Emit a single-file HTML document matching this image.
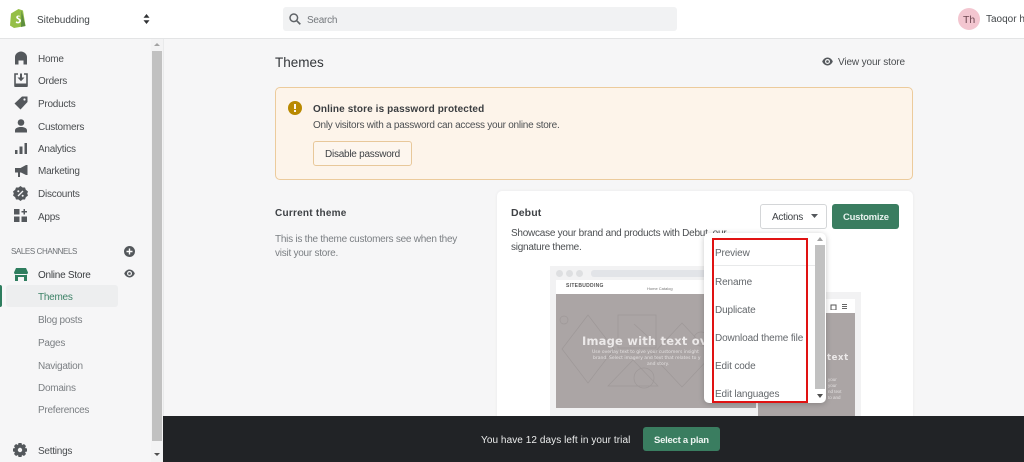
<!DOCTYPE html>
<html><head><meta charset="utf-8"><style>
html,body{margin:0;padding:0}
body{width:1024px;height:462px;overflow:hidden;background:#f6f6f7;position:relative;font-family:"Liberation Sans",sans-serif;color:#3a3d40;font-size:10px;letter-spacing:-.25px}
.t{position:absolute;white-space:nowrap;line-height:14px;margin-top:2px}
.a{position:absolute}
.b{font-weight:bold;letter-spacing:.12px}
svg{position:absolute;display:block}
.nav{left:38px;color:#4a4d50}
.sub{left:38px;color:#7b7f83}
.m{left:715px;color:#63676b;letter-spacing:-.13px}
</style></head><body>
<div class="a" style="left:0;top:0;width:1024px;height:38px;background:#fff;border-bottom:1px solid #e3e4e5"></div>
<svg style="left:9px;top:8px" width="18" height="20" viewBox="0 0 18 20"><path d="M2 5.500 9.500 1 14 2.500 16.500 18 5 20 1 17.500Z" fill="#95bf47"/><path d="M12.500 2.200 16.500 18 12 19Z" fill="#5e8e3e"/><path d="M10.800 7.800c-2-.8-3.600.2-3.600 1.600 0 1.800 3 1.800 3 3.400 0 1.200-1.500 1.400-3 .5l-.5 1.600c2.400 1 5.300.3 5.300-2.300 0-2.200-3-2.300-3-3.400 0-.6 1-.9 2.200-.4Z" fill="#fff"/></svg>
<div class="t" style="left:37px;top:12px;color:#43474a;letter-spacing:0">Sitebudding</div>
<svg style="left:143px;top:14px" width="7" height="10" viewBox="0 0 7 10"><path d="M3.500 0 6.500 3.700H.5ZM3.500 10 .5 6.300H6.500Z" fill="#2f3133"/></svg>
<div class="a" style="left:283px;top:7px;width:394px;height:24px;background:#f1f2f3;border-radius:3px"></div>
<svg style="left:289px;top:13px" width="12" height="12" viewBox="0 0 12 12"><circle cx="4.800" cy="4.800" r="3.800" fill="none" stroke="#5f6367" stroke-width="1.500"/><path d="M7.700 7.700 11.300 11.300" stroke="#5f6367" stroke-width="1.700"/></svg>
<div class="t" style="left:307px;top:12px;color:#74787c">Search</div>
<div class="a" style="left:958px;top:8px;width:22px;height:22px;border-radius:50%;background:#f3c6d0"></div>
<div class="t" style="left:963px;top:11px;color:#6d4650;font-size:10.500px;letter-spacing:0">Th</div>
<div class="t" style="left:986px;top:11px;color:#43474a;letter-spacing:0">Taoqor h</div>

<div class="a" style="left:163px;top:39px;width:1px;height:377px;background:#e9eaeb"></div>
<div class="a" style="left:151px;top:39px;width:12px;height:423px;background:#f3f3f4"></div>
<div class="a" style="left:152px;top:51px;width:10px;height:390px;background:#c1c1c1"></div>
<svg style="left:153px;top:42px" width="8" height="5"><path d="M4 1 7 4H1Z" fill="#a3a3a3"/></svg>
<svg style="left:153px;top:452px" width="8" height="5"><path d="M1 1H7L4 4Z" fill="#505050"/></svg>

<svg style="left:14px;top:51px" width="14" height="14" viewBox="0 0 14 14"><path d="M7 .5C10 .5 13 3 13 6V13.500H9.500V9.500H4.500V13.500H1V6C1 3 4 .5 7 .5Z" fill="#54585c"/></svg>
<div class="t nav" style="top:51px">Home</div>
<svg style="left:14px;top:73px" width="14" height="14" viewBox="0 0 14 14"><path d="M4 1H1V13H13V1H10" fill="none" stroke="#54585c" stroke-width="1.600"/><path d="M1 10.500H13V14H1Z" fill="#54585c"/><path d="M6 .5H8V4.500H10.500L7 8.300 3.500 4.500H6Z" fill="#54585c"/></svg>
<div class="t nav" style="top:73px">Orders</div>
<svg style="left:14px;top:96px" width="14" height="14" viewBox="0 0 14 14"><path d="M8 .5H13.500V6L6.500 13.500.5 7.500Z" fill="#54585c"/><circle cx="10.500" cy="3.500" r="1.100" fill="#f6f6f7"/></svg>
<div class="t nav" style="top:96px">Products</div>
<svg style="left:14px;top:119px" width="14" height="14" viewBox="0 0 14 14"><circle cx="7" cy="3.500" r="3.300" fill="#54585c"/><path d="M1 13.500V11.500C1 9 4 8 7 8S13 9 13 11.500V13.500Z" fill="#54585c"/></svg>
<div class="t nav" style="top:119px">Customers</div>
<svg style="left:15px;top:143px" width="12" height="11" viewBox="0 0 12 11"><path d="M0 7H2.500V11H0ZM4.500 3.500H7.500V11H4.500ZM9.500 0H12V11H9.500Z" fill="#54585c"/></svg>
<div class="t nav" style="top:141px">Analytics</div>
<svg style="left:14px;top:164px" width="14" height="14" viewBox="0 0 14 14"><path d="M12 1H13.500V11H12L7 8.500H6V13H4V8.500H1V4H6.500Z" fill="#54585c"/></svg>
<div class="t nav" style="top:163px">Marketing</div>
<svg style="left:13px;top:186px" width="15" height="15" viewBox="0 0 15 15"><path d="M7.500 0 9.500 1.500 12 1.500 12.800 3.800 15 5.500 14.200 7.500 15 9.500 12.800 11.200 12 13.500 9.500 13.500 7.500 15 5.500 13.500 3 13.500 2.200 11.200 0 9.500.8 7.500 0 5.500 2.200 3.800 3 1.500 5.500 1.500Z" fill="#54585c"/><path d="M5 10 10 5" stroke="#f6f6f7" stroke-width="1.300"/><circle cx="5.300" cy="5.300" r="1" fill="#f6f6f7"/><circle cx="9.700" cy="9.700" r="1" fill="#f6f6f7"/></svg>
<div class="t nav" style="top:186px">Discounts</div>
<svg style="left:14px;top:209px" width="14" height="13" viewBox="0 0 14 13"><path d="M0 0H5.500V5.500H0ZM0 7.500H5.500V13H0ZM7.500 7.500H13V13H7.500ZM9.500 0H11V2H13V3.500H11V5.500H9.500V3.500H7.500V2H9.500Z" fill="#54585c"/></svg>
<div class="t nav" style="top:209px">Apps</div>

<div class="t" style="left:11px;top:243px;font-size:8px;letter-spacing:-.4px;color:#6d7175">SALES CHANNELS</div>
<svg style="left:124px;top:246px" width="11" height="11" viewBox="0 0 11 11"><circle cx="5.500" cy="5.500" r="5.500" fill="#54585c"/><path d="M5.500 2.500V8.500M2.500 5.500H8.500" stroke="#fff" stroke-width="1.400"/></svg>
<svg style="left:124px;top:269px" width="11" height="9" viewBox="0 0 11 9"><path d="M5.500 .5C8 .5 10 2.500 10.800 4.500 10 6.500 8 8.500 5.500 8.500S1 6.500 .2 4.500C1 2.500 3 .5 5.500 .5Z" fill="#54585c"/><circle cx="5.500" cy="4.500" r="2.500" fill="#f6f6f7"/><circle cx="5.500" cy="4.500" r="1.300" fill="#54585c"/></svg>
<svg style="left:14px;top:268px" width="14" height="13" viewBox="0 0 14 13"><path d="M2 0H12L14 4.500C14 6 12.500 6.500 11.500 6H2.500C1.500 6.500 0 6 0 4.500Z" fill="#2e7d5e"/><path d="M1 7H4V13H1ZM10 7H13V13H10ZM4 7H10V9H4Z" fill="#2e7d5e"/></svg>
<div class="t" style="left:38px;top:267px;color:#3a3d40">Online Store</div>
<div class="a" style="left:0;top:285px;width:2px;height:22px;background:#2e7d5e;border-radius:0 2px 2px 0"></div>
<div class="a" style="left:6px;top:285px;width:112px;height:22px;background:#edeeef;border-radius:3px"></div>
<div class="t" style="left:38px;top:289px;color:#3d8267">Themes</div>
<div class="t sub" style="top:312px">Blog posts</div>
<div class="t sub" style="top:335px">Pages</div>
<div class="t sub" style="top:358px">Navigation</div>
<div class="t sub" style="top:380px">Domains</div>
<div class="t sub" style="top:402px">Preferences</div>
<svg style="left:13px;top:443px" width="14" height="14" viewBox="0 0 14 14"><path d="M5.500 0H8.500L9 2 11 1 13 3 12 5 14 5.500V8.500L12 9 13 11 11 13 9 12 8.500 14H5.500L5 12 3 13 1 11 2 9 0 8.500V5.500L2 5 1 3 3 1 5 2Z" fill="#54585c"/><circle cx="7" cy="7" r="2.200" fill="#f6f6f7"/></svg>
<div class="t nav" style="top:443px">Settings</div>

<div class="t" style="left:275px;top:52px;font-size:13.500px;line-height:17px;color:#33363a;letter-spacing:0">Themes</div>
<svg style="left:822px;top:57px" width="11" height="9" viewBox="0 0 11 9"><path d="M5.500 .5C8 .5 10 2.500 10.800 4.500 10 6.500 8 8.500 5.500 8.500S1 6.500 .2 4.500C1 2.500 3 .5 5.500 .5Z" fill="#54585c"/><circle cx="5.500" cy="4.500" r="2.500" fill="#f6f6f7"/><circle cx="5.500" cy="4.500" r="1.300" fill="#54585c"/></svg>
<div class="t" style="left:838px;top:54px;color:#4a4d50;letter-spacing:-.12px">View your store</div>

<div class="a" style="left:275px;top:87px;width:636px;height:91px;background:#fdf4ea;border:1px solid #eccb9c;border-radius:5px"></div>
<div class="a" style="left:288px;top:101px;width:14px;height:14px;border-radius:50%;background:#b98900"></div>
<div class="a" style="left:294px;top:104px;width:2px;height:5px;background:#fdf4ea"></div>
<div class="a" style="left:294px;top:110px;width:2px;height:2px;background:#fdf4ea"></div>
<div class="t b" style="left:313px;top:101px;color:#3a3d40">Online store is password protected</div>
<div class="t" style="left:313px;top:117px;color:#4c4f52">Only visitors with a password can access your online store.</div>
<div class="a" style="left:313px;top:141px;width:97px;height:23px;background:#fdf6ee;border:1px solid #e8c89a;border-radius:3px"></div>
<div class="t" style="left:325px;top:146px;color:#3f4246">Disable password</div>

<div class="t b" style="left:275px;top:205px;color:#3f4246;letter-spacing:.25px">Current theme</div>
<div class="t" style="left:275px;top:231px;color:#7b7f83">This is the theme customers see when they</div>
<div class="t" style="left:275px;top:245px;color:#7b7f83">visit your store.</div>

<div class="a" style="left:497px;top:191px;width:416px;height:230px;background:#fff;border-radius:5px 5px 0 0;box-shadow:0 0 3px rgba(0,0,0,.06)"></div>
<div class="t b" style="left:511px;top:204px;color:#3f4246;font-size:10.500px">Debut</div>
<div class="t" style="left:511px;top:225px;color:#4c4f52">Showcase your brand and products with Debut, our</div>
<div class="t" style="left:511px;top:239px;color:#4c4f52">signature theme.</div>

<div class="a" style="left:550px;top:266px;width:260px;height:150px;background:#f2f2f3"></div>
<div class="a" style="left:556px;top:270px;width:7px;height:7px;border-radius:50%;background:#dedfe1"></div>
<div class="a" style="left:566px;top:270px;width:7px;height:7px;border-radius:50%;background:#dedfe1"></div>
<div class="a" style="left:576px;top:270px;width:7px;height:7px;border-radius:50%;background:#dedfe1"></div>
<div class="a" style="left:591px;top:270px;width:120px;height:7px;border-radius:3px;background:#e2e4e8"></div>
<div class="a" style="left:556px;top:280px;width:200px;height:14px;background:#fff"></div>
<div class="t" style="left:566px;top:280px;font-size:5px;line-height:9px;font-weight:bold;letter-spacing:.3px;color:#555">SITEBUDDING</div>
<div class="t" style="left:647px;top:282px;font-size:4px;line-height:9px;letter-spacing:0;color:#777">Home  Catalog</div>
<div class="a" style="left:556px;top:294px;width:200px;height:114px;background:#aba5a5"></div>
<svg style="left:556px;top:294px" width="200" height="114" viewBox="0 0 200 114"><g fill="none" stroke="#9e9898" stroke-width=".7"><path d="M32 21 58 55 32 89 6 55Z"/><path d="M62 21H100V54H62Z"/><path d="M52 92 77 66 102 92Z"/><path d="M126 29 156 61 126 93 96 61Z"/><circle cx="88" cy="84" r="10"/><circle cx="8" cy="26" r="4"/><path d="M78 30 100 50"/><circle cx="145" cy="45" r="7"/></g></svg>
<div class="t" style="left:582px;top:332px;font-family:'DejaVu Sans',sans-serif;font-size:11.500px;font-weight:bold;letter-spacing:.2px;color:#ece9e9">Image with text ov</div>
<div class="t" style="left:592px;top:348px;font-family:'DejaVu Sans',sans-serif;font-size:4.500px;line-height:6px;letter-spacing:0;color:#e4e1e1">Use overlay text to give your customers insight</div>
<div class="t" style="left:593px;top:354px;font-family:'DejaVu Sans',sans-serif;font-size:4.500px;line-height:6px;letter-spacing:0;color:#e4e1e1">brand. Select imagery and text that relates to y</div>
<div class="t" style="left:647px;top:360px;font-family:'DejaVu Sans',sans-serif;font-size:4.500px;line-height:6px;letter-spacing:0;color:#e4e1e1">and story.</div>

<div class="a" style="left:756px;top:292px;width:105px;height:128px;background:#f2f2f3"></div>
<div class="a" style="left:758px;top:299px;width:97px;height:117px;background:#fff"></div>
<div class="a" style="left:758px;top:313px;width:97px;height:103px;background:#aba5a5"></div>
<svg style="left:830px;top:303px" width="18" height="7" viewBox="0 0 18 7"><path d="M1 2H6V7H1Z" fill="none" stroke="#555"/><path d="M12 1.500H17M12 3.500H17M12 5.500H17" stroke="#666"/></svg>
<div class="t" style="left:827px;top:349px;font-family:'DejaVu Sans',sans-serif;font-size:8.500px;font-weight:bold;letter-spacing:.6px;color:#ece9e9">text</div>
<div class="t" style="left:828px;top:375px;font-size:4.500px;line-height:6px;letter-spacing:0;color:#e4e1e1">your<br>your<br>nd text<br>to and</div>

<div class="a" style="left:760px;top:204px;width:65px;height:23px;background:#fff;border:1px solid #d4d6d8;border-radius:3px"></div>
<div class="t" style="left:772px;top:209px;color:#3f4246">Actions</div>
<svg style="left:811px;top:214px" width="7" height="4"><path d="M0 0H7L3.500 4Z" fill="#54585c"/></svg>
<div class="a" style="left:832px;top:204px;width:67px;height:25px;background:#3a7d60;border-radius:3px"></div>
<div class="t" style="left:843px;top:209px;color:#e8f2ee;font-weight:bold;font-size:9.500px">Customize</div>

<div class="a" style="left:704px;top:233px;width:122px;height:170px;background:#fff;border-radius:5px;box-shadow:0 1px 6px rgba(0,0,0,.22)"></div>
<div class="a" style="left:712px;top:265px;width:104px;height:1px;background:#e8e9ea"></div>
<div class="a" style="left:815px;top:245px;width:10px;height:144px;background:#c1c1c1"></div>
<svg style="left:816px;top:236px" width="8" height="6"><path d="M4 1 7 5H1Z" fill="#a3a3a3"/></svg>
<svg style="left:816px;top:393px" width="8" height="6"><path d="M1 1H7L4 5Z" fill="#505050"/></svg>
<div class="t m" style="top:245px">Preview</div>
<div class="t m" style="top:274px">Rename</div>
<div class="t m" style="top:302px">Duplicate</div>
<div class="t m" style="top:330px">Download theme file</div>
<div class="t m" style="top:358px">Edit code</div>
<div class="t m" style="top:386px">Edit languages</div>
<div class="a" style="left:712px;top:238px;width:92px;height:161px;border:2px solid #e01212"></div>

<div class="a" style="left:163px;top:416px;width:861px;height:46px;background:#212326"></div>
<div class="t" style="left:481px;top:432px;color:#eceded;letter-spacing:.07px">You have 12 days left in your trial</div>
<div class="a" style="left:643px;top:427px;width:77px;height:24px;background:#3a7d60;border-radius:3px"></div>
<div class="t" style="left:654px;top:432px;color:#eef5f2;font-weight:bold;font-size:9.500px">Select a plan</div>
</body></html>
